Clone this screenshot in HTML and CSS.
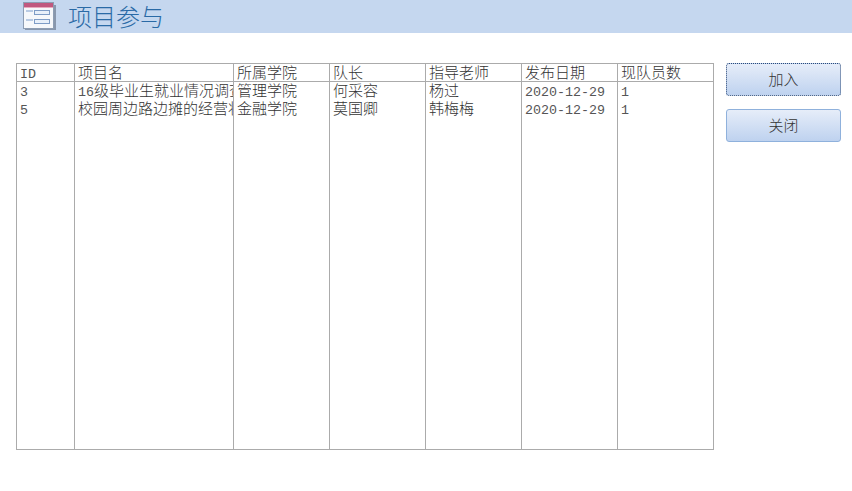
FILE: index.html
```html
<!DOCTYPE html>
<html lang="zh">
<head>
<meta charset="utf-8">
<title>项目参与</title>
<link rel="stylesheet" href="styles.css">
</head>
<body>
<header class="titlebar">
  <svg class="form-icon" width="34" height="30" viewBox="0 0 34 30" aria-hidden="true">
    <rect x="3" y="5" width="31" height="25" fill="#5f6c80" opacity="0.6"/>
    <rect x="1.5" y="2.5" width="30" height="26" fill="#f6f8fb" stroke="#8d9db3"/>
    <rect x="2" y="3" width="29" height="4" fill="#c0587f"/>
    <rect x="2" y="7" width="29" height="1" fill="#e9a9bd"/>
    <rect x="4" y="10" width="7" height="2" fill="#b9cbe4"/>
    <rect x="12.5" y="10.5" width="15" height="4" fill="#e8f0fa" stroke="#7e9cc6"/>
    <rect x="4" y="19" width="7" height="2" fill="#b9cbe4"/>
    <rect x="12.5" y="19.5" width="15" height="4" fill="#e8f0fa" stroke="#7e9cc6"/>
  </svg>
  <h1 class="title">项目参与</h1>
</header>
<main class="content">
  <table class="grid">
    <colgroup>
      <col class="c-id"><col class="c-name"><col class="c-std"><col class="c-std"><col class="c-std"><col class="c-std"><col class="c-std">
    </colgroup>
    <thead>
      <tr><th><span class="lat">ID</span></th><th>项目名</th><th>所属学院</th><th>队长</th><th>指导老师</th><th>发布日期</th><th>现队员数</th></tr>
    </thead>
    <tbody>
      <tr><td><span class="lat">3</span></td><td><span class="lat">16</span>级毕业生就业情况调查</td><td>管理学院</td><td>何采容</td><td>杨过</td><td><span class="lat">2020-12-29</span></td><td><span class="lat">1</span></td></tr>
      <tr><td><span class="lat">5</span></td><td>校园周边路边摊的经营状况</td><td>金融学院</td><td>莫国卿</td><td>韩梅梅</td><td><span class="lat">2020-12-29</span></td><td><span class="lat">1</span></td></tr>
      <tr class="filler"><td></td><td></td><td></td><td></td><td></td><td></td><td></td></tr>
    </tbody>
  </table>
  <div class="actions">
    <button class="btn btn-focus" type="button">加入</button>
    <button class="btn" type="button">关闭</button>
  </div>
</main>
</body>
</html>
```
FILE: styles.css
```css
html, body {
  margin: 0;
  padding: 0;
  background: #fff;
}
body {
  width: 852px;
  height: 491px;
  overflow: hidden;
  font-family: "Noto Sans CJK SC", "Liberation Mono", sans-serif;
}
.titlebar {
  display: flex;
  align-items: flex-start;
  height: 33px;
  background: #c5d7ef;
  padding-left: 22px;
  box-sizing: border-box;
}
.form-icon {
  display: block;
  flex: none;
}
.title {
  margin: 0 0 0 12px;
  font-size: 24px;
  line-height: 32px;
  font-weight: 300;
  color: #2a6aa6;
}
.content {
  display: flex;
  align-items: flex-start;
  gap: 12px;
  padding: 30px 0 0 16px;
}
.grid {
  table-layout: fixed;
  border-collapse: collapse;
  width: 698px;
  font-size: 15px;
  font-weight: 300;
  color: #333;
}
.c-id { width: 58px; }
.c-name { width: 159px; }
.c-std { width: 96px; }
.grid th, .grid td {
  border: 1px solid #ababab;
  padding: 0 0 0 3px;
  font-weight: 300;
  text-align: left;
  white-space: nowrap;
  overflow: hidden;
  vertical-align: top;
}
.grid th {
  line-height: 15px;
  padding-bottom: 2px;
}
.grid td {
  line-height: 16px;
  padding-bottom: 2px;
}
.grid tbody td {
  border-top: 0;
  border-bottom: 0;
}
.grid .filler td {
  height: 331px;
  padding-bottom: 0;
  border-bottom: 1px solid #ababab;
}
.lat {
  font-family: "Liberation Mono", monospace;
  font-size: 13.33px;
  line-height: 0;
  color: #555;
}
.actions {
  display: flex;
  flex-direction: column;
  gap: 13px;
  width: 115px;
}
.btn {
  height: 33px;
  padding: 0 0 2px;
  border: 1px solid #8fb1dc;
  border-radius: 3px;
  background: linear-gradient(#e6edf9, #bed2ef);
  color: #333;
  font-family: inherit;
  font-size: 15px;
  font-weight: 300;
  line-height: 1;
}
.btn-focus {
  border: 1px dotted #2c4a78;
}
```
